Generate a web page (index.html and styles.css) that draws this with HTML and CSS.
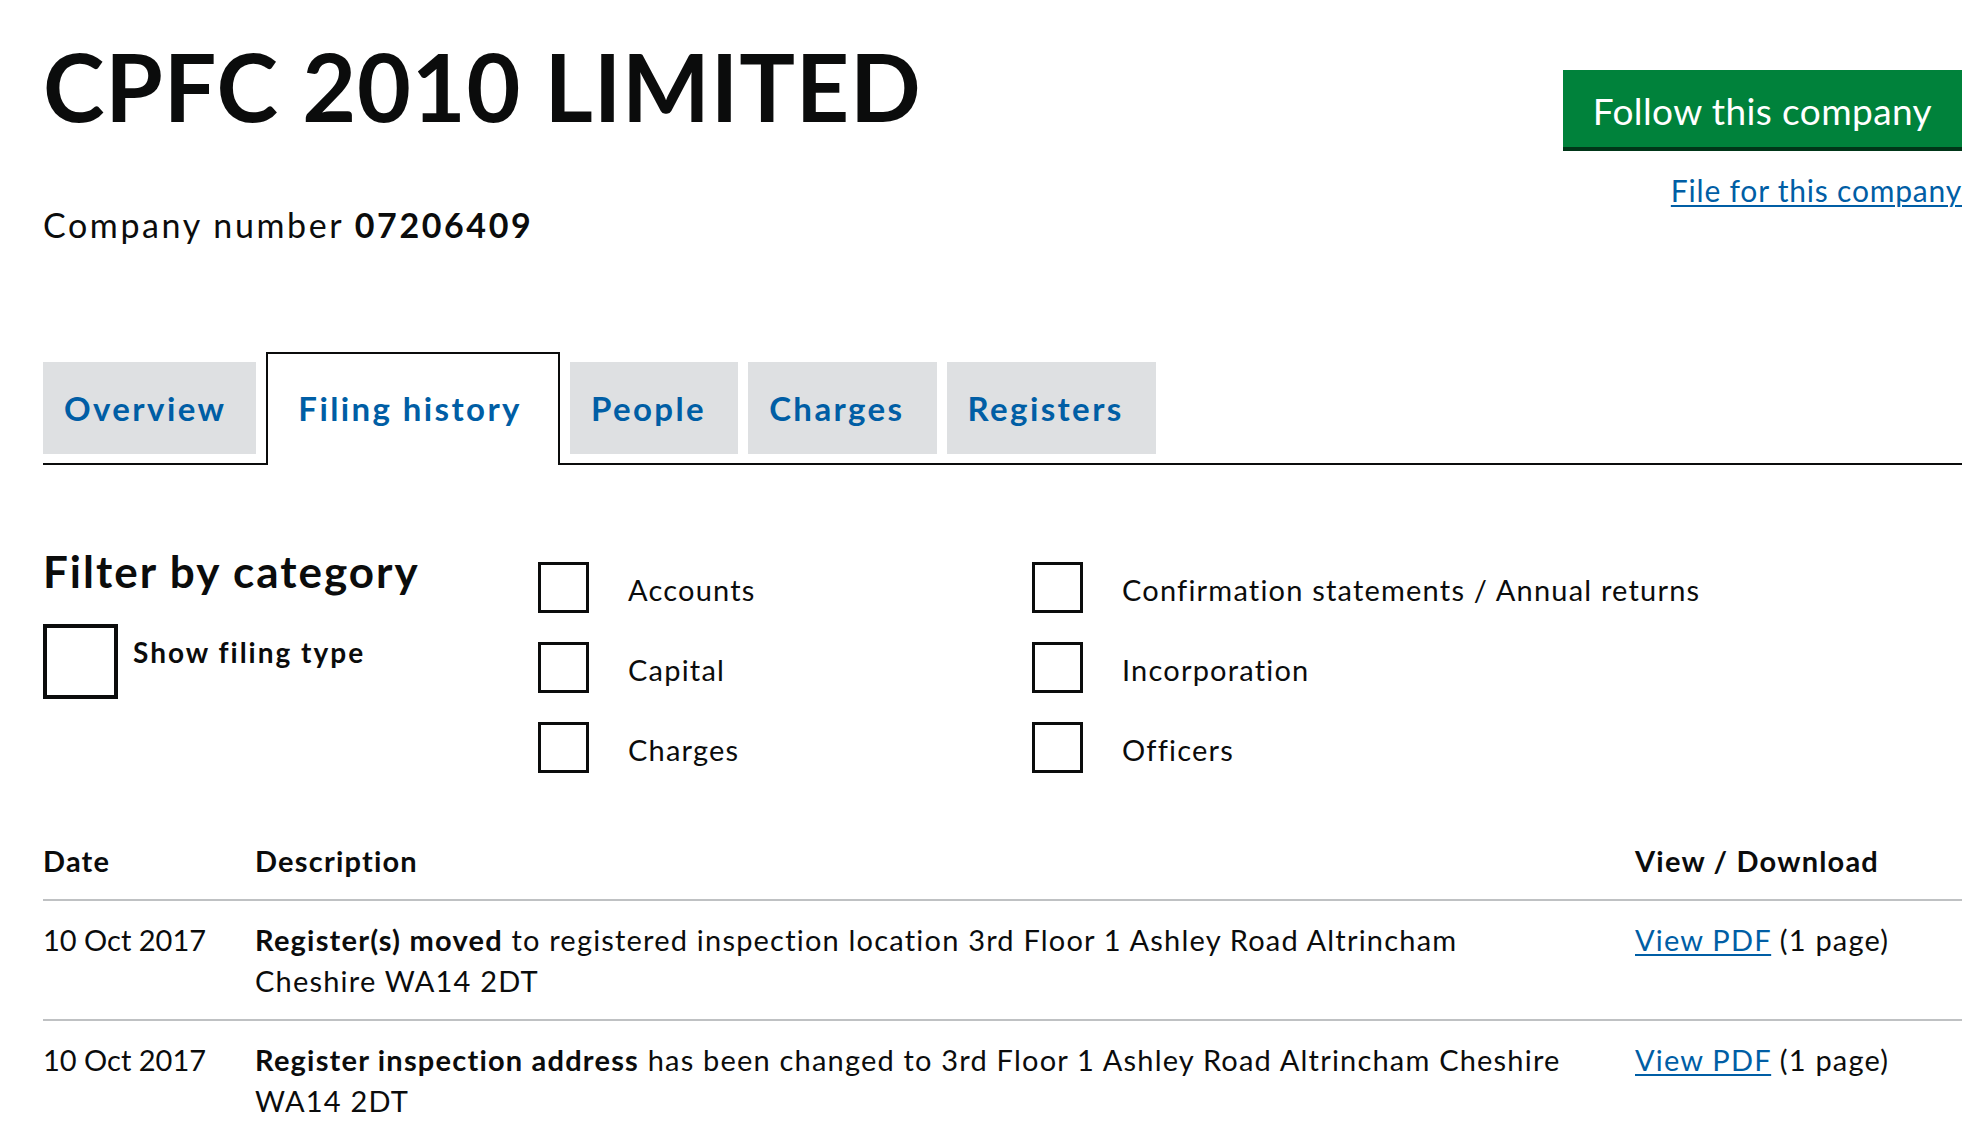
FILE: index.html
```html
<!DOCTYPE html>
<html lang="en">
<head>
<meta charset="utf-8">
<title>CPFC 2010 LIMITED - Filing history</title>
<link rel="stylesheet" href="styles.css">
</head>
<body>
<main class="page">
  <header class="company-header">
    <div class="company-title">
      <h1 class="heading-xlarge">CPFC 2010 LIMITED</h1>
      <p class="company-number">Company number <strong>07206409</strong></p>
    </div>
    <div class="company-actions">
      <a class="button-follow" href="#">Follow this company</a>
      <a class="file-link" href="#">File for this company</a>
    </div>
  </header>

  <nav class="tabs">
    <ul class="tab-list">
      <li class="tab"><a href="#">Overview</a></li>
      <li class="tab tab-active"><a href="#">Filing history</a></li>
      <li class="tab"><a href="#">People</a></li>
      <li class="tab"><a href="#">Charges</a></li>
      <li class="tab"><a href="#">Registers</a></li>
    </ul>
  </nav>

  <section class="filter">
    <div class="filter-intro">
      <h2 class="filter-heading">Filter by category</h2>
      <label class="show-type"><span class="box box-large"></span><span class="show-type-text">Show filing type</span></label>
    </div>
    <div class="filter-options">
      <label class="option"><span class="box"></span><span class="option-text">Accounts</span></label>
      <label class="option"><span class="box"></span><span class="option-text">Capital</span></label>
      <label class="option"><span class="box"></span><span class="option-text">Charges</span></label>
      <label class="option"><span class="box"></span><span class="option-text">Confirmation statements / Annual returns</span></label>
      <label class="option"><span class="box"></span><span class="option-text">Incorporation</span></label>
      <label class="option"><span class="box"></span><span class="option-text">Officers</span></label>
    </div>
  </section>

  <table class="filings">
    <colgroup>
      <col class="col-date">
      <col class="col-desc">
      <col class="col-view">
    </colgroup>
    <thead>
      <tr>
        <th>Date</th>
        <th>Description</th>
        <th>View / Download</th>
      </tr>
    </thead>
    <tbody>
      <tr>
        <td class="cell-date">10 Oct 2017</td>
        <td><strong>Register(s) moved</strong> to registered inspection location 3rd Floor 1 Ashley Road Altrincham<br>Cheshire WA14 2DT</td>
        <td><a href="#">View PDF</a> (1 page)</td>
      </tr>
      <tr>
        <td class="cell-date">10 Oct 2017</td>
        <td><strong>Register inspection address</strong> has been changed to 3rd Floor 1 Ashley Road Altrincham Cheshire<br>WA14 2DT</td>
        <td><a href="#">View PDF</a> (1 page)</td>
      </tr>
    </tbody>
  </table>
</main>
</body>
</html>
```

FILE: styles.css
```css
html, body {
  margin: 0;
  padding: 0;
  background: #ffffff;
}

body {
  font-family: Lato, "Noto Sans", "Liberation Sans", sans-serif;
  color: #0b0c0c;
}

.page {
  padding: 0 9px 0 43px;
}

/* Header */
.company-header {
  display: flex;
  justify-content: space-between;
  align-items: flex-start;
}

.heading-xlarge {
  margin: 40px 0 0;
  font-size: 93px;
  line-height: 1;
  font-weight: 700;
  letter-spacing: 0.8px;
}

.company-number {
  margin: 72px 0 0;
  font-size: 34px;
  line-height: 1.2;
  letter-spacing: 2.6px;
}

.company-number strong {
  font-weight: 700;
  letter-spacing: 2.6px;
}

.company-actions {
  display: flex;
  flex-direction: column;
  align-items: flex-end;
  margin-top: 70px;
}

.button-follow {
  display: block;
  background: #00823b;
  color: #ffffff;
  text-decoration: none;
  font-size: 37px;
  line-height: 73px;
  letter-spacing: 0.4px;
  padding: 4px 30px 0;
  border-bottom: 4px solid #003618;
}

.file-link {
  margin-top: 21px;
  font-size: 30px;
  line-height: 1.2;
  letter-spacing: 0.8px;
  color: #005ea5;
  text-decoration: underline;
  text-decoration-thickness: 2px;
  text-underline-offset: 3px;
}

/* Tabs */
.tabs {
  margin-top: 106px;
}

.tab-list {
  list-style: none;
  margin: 0;
  padding: 0;
  display: flex;
  align-items: flex-end;
  gap: 10px;
  border-bottom: 2px solid #0b0c0c;
}

.tab {
  background: #dee0e2;
  margin-bottom: 9px;
}

.tab a {
  display: block;
  padding: 0 32px 0 21px;
  line-height: 92px;
  font-size: 33px;
  font-weight: 700;
  letter-spacing: 2.4px;
  color: #005ea5;
  text-decoration: none;
}

.tab:first-child a {
  padding-right: 30px;
}

.tab-active {
  background: #ffffff;
  border: 2px solid #0b0c0c;
  border-bottom: 0;
  margin-bottom: -2px;
}

.tab-active a {
  padding: 8px 36px 11px 30px;
}

/* Filter */
.filter {
  display: grid;
  grid-template-columns: 495px 1fr;
  margin-top: 80px;
}

.filter-heading {
  margin: 0;
  font-size: 44px;
  line-height: 1.2;
  font-weight: 700;
  letter-spacing: 2px;
}

.show-type {
  display: flex;
  align-items: flex-start;
  gap: 15px;
  margin-top: 26px;
}

.show-type-text {
  font-size: 28px;
  font-weight: 700;
  line-height: 1.2;
  letter-spacing: 2px;
  margin-top: 12px;
}

.box {
  display: block;
  flex: none;
  width: 45px;
  height: 45px;
  border: 3px solid #0b0c0c;
  background: #ffffff;
}

.box-large {
  width: 67px;
  height: 67px;
  border-width: 4px;
}

.filter-options {
  display: grid;
  grid-auto-flow: column;
  grid-template-columns: 494px 1fr;
  grid-template-rows: repeat(3, 51px);
  row-gap: 29px;
  padding-top: 17px;
}

.option {
  display: flex;
  align-items: center;
  gap: 39px;
}

.option-text {
  font-size: 29px;
  line-height: 1.2;
  letter-spacing: 1.2px;
  margin-top: 6px;
}

/* Table */
.filings {
  width: 100%;
  margin-top: 49px;
  border-collapse: collapse;
  table-layout: fixed;
  font-size: 29px;
  line-height: 41px;
  letter-spacing: 1.2px;
}

.col-date {
  width: 212px;
}

.col-desc {
  width: 1380px;
}

.filings th,
.filings td {
  text-align: left;
  vertical-align: top;
  padding: 18px 20px 18px 0;
  border-bottom: 2px solid #bfc1c3;
}

.filings th {
  font-weight: 700;
}

.filings .cell-date {
  letter-spacing: 0;
}

.filings td strong {
  font-weight: 700;
}

.filings a {
  color: #005ea5;
  text-decoration: underline;
  text-decoration-thickness: 2px;
  text-underline-offset: 3px;
}
```
